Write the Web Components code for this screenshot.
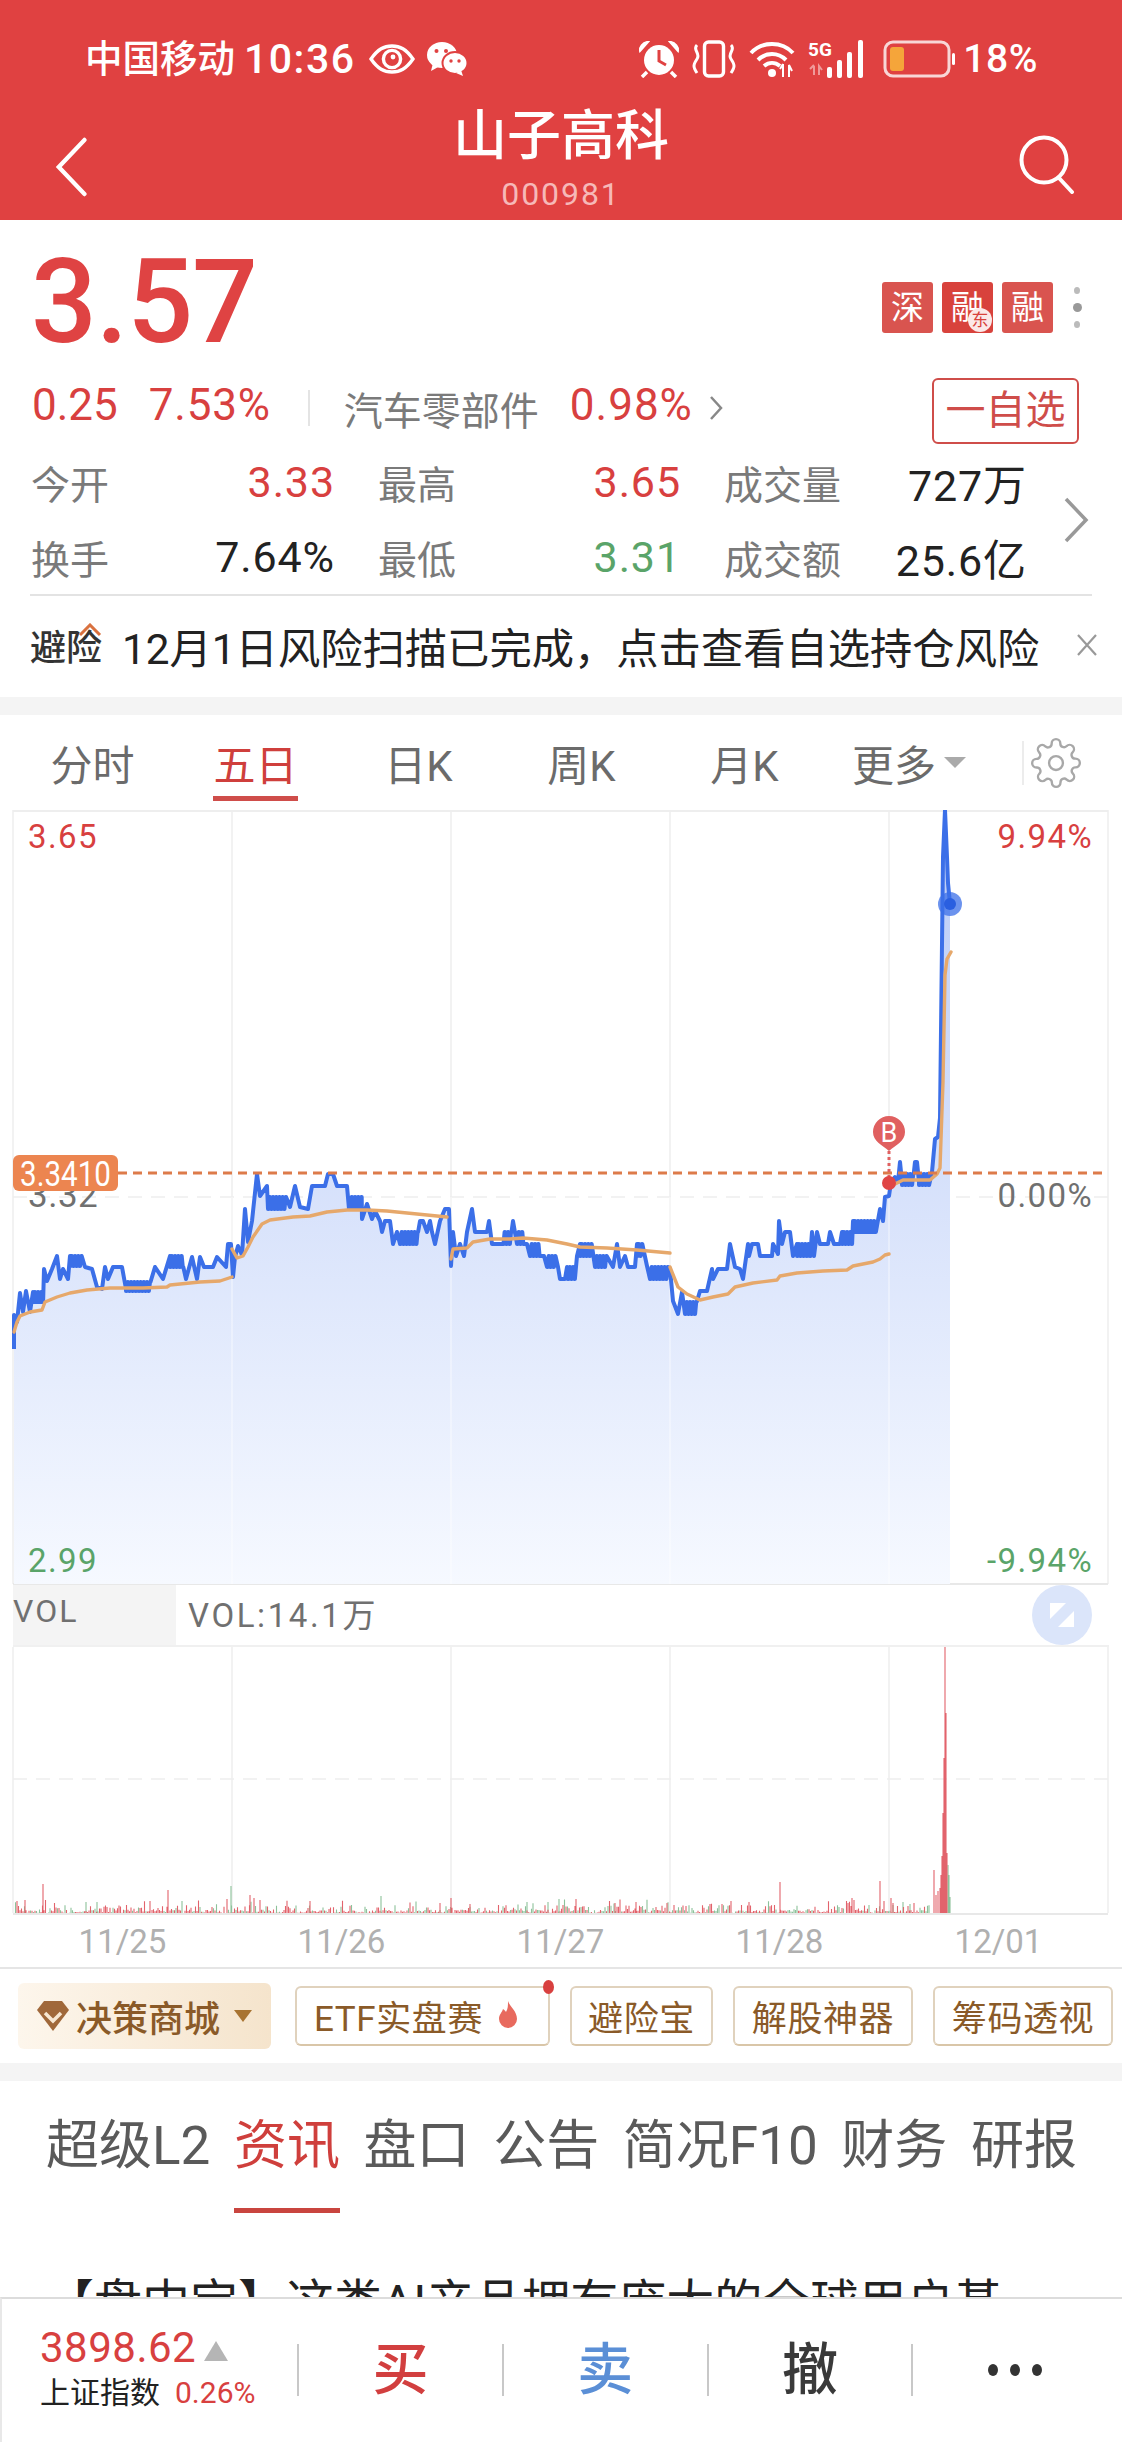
<!DOCTYPE html>
<html lang="zh">
<head>
<meta charset="utf-8">
<title>山子高科</title>
<style>
  html, body { margin: 0; padding: 0; background: #fff; }
  body { width: 1122px; height: 2442px; overflow: hidden; font-family: Roboto, "Noto Sans CJK SC", sans-serif; }
  stock-page { display: flex; flex-direction: column; height: 2442px; }
  .scroll { flex: 1; overflow: hidden; min-height: 0; }
</style>
</head>
<body>
<stock-page>
  <div class="scroll">
    <stock-header></stock-header>
    <quote-panel></quote-panel>
    <risk-notice></risk-notice>
    <gray-band></gray-band>
    <chart-tabs></chart-tabs>
    <price-chart></price-chart>
    <vol-header></vol-header>
    <volume-chart></volume-chart>
    <date-axis></date-axis>
    <tool-row></tool-row>
    <gray-band></gray-band>
    <detail-tabs></detail-tabs>
    <news-line>【盘中宝】这类AI产品拥有庞大的全球用户基</news-line>
  </div>
  <bottom-bar></bottom-bar>
</stock-page>

<script>
const FONT = 'Roboto, "Noto Sans CJK SC", sans-serif';

class StockPage extends HTMLElement {
  constructor() {
    super();
    this.attachShadow({ mode: 'open' });
    this.shadowRoot.innerHTML = `
      <style>
        :host { display: flex; flex-direction: column; height: 2442px; font-family: ${FONT}; }
        ::slotted(.scroll) { flex: 1; overflow: hidden; min-height: 0; }
      </style>
      <slot></slot>`;
  }
}

class StockHeader extends HTMLElement {
  constructor() {
    super();
    this.attachShadow({ mode: 'open' });
    this.shadowRoot.innerHTML = `
      <style>
        :host { display: block; height: 220px; background: #e04141; color: #fff; }
        .status { height: 100px; box-sizing: border-box; padding: 39px 84px 0 85px; display: flex; justify-content: space-between; align-items: flex-start; }
        .side { display: flex; align-items: center; height: 40px; }
        .carrier { font-size: 37.500px; line-height: 40px; white-space: nowrap; font-weight: 500; }
        .time { font-size: 41px; line-height: 40px; font-weight: 500; margin-left: 9px; letter-spacing: 1.500px; }
        .pct { font-size: 39px; line-height: 40px; font-weight: 500; margin-left: 8px; letter-spacing: .6px; }
        svg { display: block; flex: none; }
        .nav { height: 120px; display: grid; grid-template-columns: 1fr auto 1fr; position: relative; }
        .back { padding: 37px 0 0 54px; }
        .search { justify-self: end; padding: 34px 45px 0 0; }
        .mid { text-align: center; margin-top: 5px; }
        .name { font-size: 54px; line-height: 64px; font-weight: 500; }
        .code { font-size: 32px; line-height: 34px; margin-top: 8px; color: #f6b8b8; letter-spacing: 1.900px; }
      </style>
      <div class="status">
        <div class="side">
          <span class="carrier">中国移动</span><span class="time">10:36</span>
          <svg style="margin-left:13px" width="46" height="30" viewBox="0 0 46 30"><path d="M2 15C9 5 15 2 23 2s14 3 21 13c-7 10-13 13-21 13S9 25 2 15z" fill="none" stroke="#fff" stroke-width="3.400"/><circle cx="23" cy="15" r="8.600" fill="none" stroke="#fff" stroke-width="3.400"/><circle cx="24" cy="13" r="2.400" fill="#fff"/></svg>
          <svg style="margin-left:11px" width="42" height="36" viewBox="0 0 42 36"><ellipse cx="16" cy="14" rx="15" ry="13" fill="#fff"/><path d="M7 22l-2 8 9-5z" fill="#fff"/><ellipse cx="29" cy="22" rx="12.500" ry="11" fill="#fff" stroke="#e04141" stroke-width="2"/><path d="M35 29l2 6-7-3z" fill="#fff"/><circle cx="10.500" cy="10" r="2" fill="#e04141"/><circle cx="20" cy="10" r="2" fill="#e04141"/><circle cx="25" cy="20" r="1.700" fill="#e04141"/><circle cx="33" cy="20" r="1.700" fill="#e04141"/></svg>
        </div>
        <div class="side">
          <svg width="42" height="38" viewBox="0 0 42 38"><circle cx="21" cy="20" r="15" fill="#fff"/><path d="M21 10v11l7 4" fill="none" stroke="#e04141" stroke-width="3"/><path d="M2 11L10 2l-1 0C5 3 1 7 2 11zM40 11L32 2l1 0c4 1 8 5 7 9z" fill="#fff" stroke="#fff" stroke-width="2"/><path d="M9 32l-5 5M33 32l5 5" stroke="#fff" stroke-width="3.500"/></svg>
          <svg style="margin-left:11px" width="46" height="38" viewBox="0 0 46 38"><rect x="13.500" y="2" width="19" height="34" rx="4" fill="none" stroke="#fff" stroke-width="3.400"/><path d="M6 5c-5 5 4 8 0 14s-4 8 0 14M40 5c5 5-4 8 0 14s4 8 0 14" fill="none" stroke="#fff" stroke-width="3"/></svg>
          <svg style="margin-left:12px" width="47" height="38" viewBox="0 0 47 38"><path d="M2 13C13 1 33 1 44 13" fill="none" stroke="#fff" stroke-width="4"/><path d="M9 20c8-8 20-8 28 0" fill="none" stroke="#fff" stroke-width="4"/><path d="M15 26c5-4 11-4 16 0" fill="none" stroke="#fff" stroke-width="4"/><circle cx="23" cy="33" r="4" fill="#fff"/><path d="M34 24v13M34 24l-3 5M40 37V25l3 6" fill="none" stroke="#fff" stroke-width="2"/></svg>
          <svg style="margin-left:12px" width="60" height="40" viewBox="0 0 60 40"><text x="0" y="17" font-size="19" font-weight="700" fill="#fff" font-family="Roboto">5G</text><path d="M6 27v9M2 30l4-4M11 36v-9l3 4" fill="none" stroke="#ef9a9a" stroke-width="2"/><g fill="#fff"><rect x="19" y="28" width="5" height="11" rx="2"/><rect x="29" y="21" width="5" height="18" rx="2"/><rect x="39" y="13" width="5" height="26" rx="2"/><rect x="50" y="1" width="5" height="38" rx="2"/></g></svg>
          <svg style="margin-left:15px" width="72" height="38" viewBox="0 0 72 38"><rect x="2" y="2" width="64" height="34" rx="8" fill="none" stroke="#f8d6d6" stroke-width="3"/><rect x="7" y="7" width="14" height="24" rx="3" fill="#f5a53a"/><rect x="69" y="13" width="3" height="12" rx="1.500" fill="#fff"/></svg>
          <span class="pct">18%</span>
        </div>
      </div>
      <div class="nav">
        <div class="back"><svg width="34" height="60" viewBox="0 0 34 60"><path d="M31 3L4 30l27 27" fill="none" stroke="#fff" stroke-width="4.500" stroke-linecap="round" stroke-linejoin="miter" transform="translate(1 0) scale(.95 1)"/></svg></div>
        <div class="mid"><div class="name">山子高科</div><div class="code">000981</div></div>
        <div class="search"><svg width="60" height="60" viewBox="0 0 60 60"><circle cx="27" cy="26" r="22.500" fill="none" stroke="#fff" stroke-width="4"/><path d="M42 44l13 14" stroke="#fff" stroke-width="4" stroke-linecap="round"/></svg></div>
      </div>`;
  }
}

class QuotePanel extends HTMLElement {
  constructor() {
    super();
    this.attachShadow({ mode: 'open' });
    this.shadowRoot.innerHTML = `
      <style>
        :host { display: block; height: 373px; box-sizing: border-box; position: relative; font-family: ${FONT}; }
        .top { height: 152px; display: flex; justify-content: space-between; padding: 0 38px 0 31px; }
        .price { font-size: 116px; line-height: 164px; font-weight: 500; color: #df4343; letter-spacing: -1px; }
        .marks { display: flex; align-items: center; gap: 9px; padding-top: 62px; height: 51px; }
        .mk { width: 51px; height: 51px; border-radius: 3px; background: #d9544f; color: #fff; font-size: 33px; line-height: 51px; text-align: center; position: relative; }
        .mk.dk { background: #d8423c; }
        .dong { position: absolute; right: 1px; bottom: 1px; width: 24px; height: 24px; border-radius: 50%; background: #fbe9e8; color: #d8423c; font-size: 17px; line-height: 24px; }
        .dots { display: flex; flex-direction: column; align-items: center; gap: 9px; margin-left: 8px; width: 14px; }
        .dots i { display: block; width: 6px; height: 7px; border-radius: 50%; background: #bbb; }
        .dots i:nth-child(2) { width: 9px; height: 9px; background: #999; }
        .change { display: flex; align-items: center; height: 72px; padding: 0 43px 0 32px; font-size: 44px; color: #d8403f; }
        .n { margin-bottom: 6px; }
        .change .g { margin-left: 31px; letter-spacing: .8px; }
        .rule { width: 2px; height: 36px; background: #e4e4e4; margin: 0 34px 0 37px; }
        .sector { font-size: 39px; color: #7a7a7a; }
        .sp { margin-left: 31px; letter-spacing: 1px; }
        .add { margin-left: auto; margin-top: 6px; width: 147px; height: 66px; box-sizing: border-box; border: 2px solid #cf4d4a; border-radius: 6px; color: #cf4d4a; font-size: 40px; line-height: 62px; text-align: center; white-space: nowrap; }
        .grid { display: grid; grid-template-columns: 304px 303px 303px; column-gap: 43px; padding-left: 31px; }
        .cell { display: flex; justify-content: space-between; align-items: center; height: 75px; font-size: 39px; color: #7a7a7a; }
        .cell b { font-weight: 400; font-size: 43px; letter-spacing: .9px; }
        .r { color: #d8403f; } .k { color: #222; } .gn { color: #5aa469; }
        .more { position: absolute; left: 1063px; top: 277px; }
        .line { height: 2px; background: #e3e3e3; margin: 0 30px; }
      </style>
      <div class="top">
        <div class="price">3.57</div>
        <div class="marks">
          <div class="mk">深</div>
          <div class="mk dk">融<span class="dong">东</span></div>
          <div class="mk">融</div>
          <div class="dots"><i></i><i></i><i></i></div>
        </div>
      </div>
      <div class="change">
        <span class="n">0.25</span><span class="n g">7.53%</span><span class="rule"></span>
        <span class="sector">汽车零部件</span><span class="n sp">0.98%</span>
        <svg style="margin-left:15px" width="16" height="26" viewBox="0 0 16 26"><path d="M3 2l10 11L3 24" fill="none" stroke="#888" stroke-width="2.500"/></svg>
        <span class="add">一自选</span>
      </div>
      <div class="grid">
        <div class="cell"><span>今开</span><b class="r">3.33</b></div>
        <div class="cell"><span>最高</span><b class="r">3.65</b></div>
        <div class="cell"><span>成交量</span><b class="k">727万</b></div>
        <div class="cell"><span>换手</span><b class="k">7.64%</b></div>
        <div class="cell"><span>最低</span><b class="gn">3.31</b></div>
        <div class="cell"><span>成交额</span><b class="k">25.6亿</b></div>
      </div>
      <svg class="more" width="26" height="46" viewBox="0 0 26 46"><path d="M3 2l20 21L3 44" fill="none" stroke="#999" stroke-width="3.500"/></svg>
      <div class="line"></div>`;
  }
}

class RiskNotice extends HTMLElement {
  constructor() {
    super();
    this.attachShadow({ mode: 'open' });
    this.shadowRoot.innerHTML = `
      <style>
        :host { display: flex; align-items: center; height: 104px; padding: 0 24px 0 30px; font-family: ${FONT}; color: #222; }
        .tag { position: relative; font-size: 36px; font-weight: 500; width: 72px; color: #333; white-space: nowrap; }
        .tag svg { position: absolute; left: 48px; top: 4px; }
        .txt { font-size: 42.300px; margin-left: 20px; white-space: nowrap; }
        svg.x { margin-left: auto; }
      </style>
      <span class="tag">避险<svg width="24" height="14" viewBox="0 0 24 14"><path d="M2 12L12 2l10 10" fill="none" stroke="#d9713f" stroke-width="3"/></svg></span>
      <span class="txt">12月1日风险扫描已完成，点击查看自选持仓风险</span>
      <svg class="x" width="22" height="24" viewBox="0 0 22 24"><path d="M2 2l18 20M20 2L2 22" stroke="#999" stroke-width="2.200"/></svg>`;
  }
}

class GrayBand extends HTMLElement {
  constructor() {
    super();
    this.attachShadow({ mode: 'open' });
    this.shadowRoot.innerHTML = `<style>:host { display: block; height: 18px; background: #f4f4f4; }</style>`;
  }
}

class ChartTabs extends HTMLElement {
  constructor() {
    super();
    this.attachShadow({ mode: 'open' });
    const tabs = ['分时', '五日', '日K', '周K', '月K'];
    this.shadowRoot.innerHTML = `
      <style>
        :host { display: flex; height: 95px; box-sizing: border-box; padding-left: 11px; align-items: stretch; font-family: ${FONT}; color: #6b6b6b; font-size: 42px; }
        .t { width: 163px; display: flex; justify-content: center; align-items: center; }
        .t span { display: block; line-height: 52px; padding-top: 16px; padding-bottom: 3px; border-bottom: 5px solid transparent; }
        .t.on { color: #cf3f3c; }
        .t.on span { border-bottom-color: #cf4d4a; }
        .m { display: flex; align-items: center; margin-left: 26px; width: 170px; }
        .m i { display: block; width: 0; height: 0; border: 11px solid transparent; border-top: 11px solid #aaa; border-bottom: 0; margin-left: 8px; }
        .sep { width: 2px; height: 44px; background: #ececec; align-self: center; }
        .gear { align-self: center; margin: 0 0 0 6px; }
      </style>
      ${tabs.map((t, i) => `<div class="t${i === 1 ? ' on' : ''}"><span>${t}</span></div>`).join('')}
      <div class="m"><span>更多</span><i></i></div>
      <div class="sep"></div>
      <svg class="gear" width="52" height="52" viewBox="0 0 24 24" fill="none" stroke="#a8a8a8" stroke-width="1.100"><circle cx="12" cy="12" r="3.200"/><path d="M19.400 15a1.650 1.650 0 0 0 .33 1.820l.06.06a2 2 0 0 1-2.830 2.830l-.06-.06a1.650 1.650 0 0 0-1.820-.33 1.650 1.650 0 0 0-1 1.510V21a2 2 0 0 1-4 0v-.09A1.650 1.650 0 0 0 9 19.400a1.650 1.650 0 0 0-1.820.33l-.06.06a2 2 0 0 1-2.830-2.830l.06-.06a1.650 1.650 0 0 0 .33-1.820 1.650 1.650 0 0 0-1.510-1H3a2 2 0 0 1 0-4h.09A1.650 1.650 0 0 0 4.600 9a1.650 1.650 0 0 0-.33-1.820l-.06-.06a2 2 0 0 1 2.830-2.830l.06.06a1.650 1.650 0 0 0 1.820.33H9a1.650 1.650 0 0 0 1-1.510V3a2 2 0 0 1 4 0v.09a1.650 1.650 0 0 0 1 1.510 1.650 1.650 0 0 0 1.820-.33l.06-.06a2 2 0 0 1 2.830 2.830l-.06.06a1.650 1.650 0 0 0-.33 1.820V9a1.650 1.650 0 0 0 1.510 1H21a2 2 0 0 1 0 4h-.09a1.650 1.650 0 0 0-1.510 1z"/></svg>`;
  }
}

// o(x1,x2,a,b) = a stretch where the price flips fast between two ticks
const o = (x1, x2, a, b) => { const r = []; let f = 0; for (let x = x1; x <= x2; x += 1.6) { r.push([x, f ? a : b]); r.push([x + .5, f ? a : b]); f = !f; } return r; };

const BLUE = [
  [14,1350],[14,1316],[17,1323],[20,1294],[23,1313],[26,1292],[30,1313],[33,1293],...o(33,43,1293,1303),[44,1270],[47,1282],[52,1270],[57,1257],[60,1280],[63,1270],[68,1280],[70,1257],...o(70,82,1257,1267),[85,1268],[92,1270],[97,1288],[102,1290],[105,1268],[108,1280],[113,1268],[122,1268],[126,1290],...o(126,150,1283,1292),[155,1268],[163,1280],[170,1257],...o(170,183,1257,1268),[186,1280],[192,1258],[197,1280],[200,1258],[204,1268],[213,1268],[217,1258],[226,1268],[228,1245],[231,1245],[233,1278],[235,1258],[238,1247],[242,1256],[245,1210],[248,1243],[252,1222],[257,1175],[260,1197],[267,1187],[268,1210],...o(268,287,1198,1210),[290,1208],[295,1187],[300,1208],[308,1210],[312,1187],[325,1187],[328,1175],[333,1175],[337,1187],[347,1187],[349,1210],
  ...o(350,362,1198,1210),[362,1220],[367,1205],[372,1220],[375,1212],[380,1222],[382,1233],[385,1222],[390,1222],[393,1245],[397,1233],[400,1245],...o(400,418,1233,1245),[420,1222],[423,1222],[427,1233],[430,1222],[432,1233],[435,1245],[440,1222],[445,1210],[449,1210],[451,1267],[453,1233],[456,1257],[460,1245],[464,1257],[467,1233],[472,1210],[475,1233],[487,1233],[489,1222],[492,1245],[502,1245],...o(503,512,1233,1245),[513,1222],[517,1245],...o(517,524,1233,1245),[527,1245],...o(530,541,1245,1257),[544,1257],...o(547,556,1257,1268),[558,1268],[560,1280],[565,1280],[567,1268],...o(568,575,1268,1280),[577,1257],[580,1245],...o(580,592,1245,1257),[595,1268],...o(595,607,1257,1268),[613,1268],[617,1245],[620,1268],[625,1257],[628,1268],[635,1268],[637,1245],...o(637,643,1245,1257),[647,1267],[650,1280],...o(650,668,1268,1280),
  [670,1270],[673,1302],[678,1315],[682,1293],[685,1315],...o(685,697,1303,1315),[700,1292],[707,1292],[712,1270],[713,1280],[718,1270],[727,1270],[730,1245],[735,1268],[740,1270],[743,1280],[748,1245],[749,1257],[752,1245],[758,1245],[760,1257],[772,1257],[773,1245],[778,1255],[779,1222],[782,1245],[785,1233],[790,1233],[793,1257],[797,1245],...o(797,810,1245,1257),[812,1233],[814,1257],[817,1233],[820,1245],[828,1245],[830,1233],[834,1245],[840,1245],[842,1233],...o(842,852,1233,1245),[853,1222],...o(853,877,1222,1233),[880,1210],[883,1222],[885,1198],[889,1197],[891,1183],[895,1178],[898,1183],[900,1163],[902,1183],...o(902,914,1175,1186),[915,1163],[917,1163],[919,1183],...o(919,930,1175,1186),[932,1173],[935,1140],[938,1138],[940,1119],[943,858],[945,811],[947,858],[948,884],[950,905]
];
const ORANGE = [
  [[14,1333],[17,1323],[20,1317],[30,1313],[42,1311],[45,1303],[57,1298],[70,1294],[87,1291],[110,1289],[143,1289],[167,1288],[170,1286],[200,1283],[220,1282],[232,1278]],
  [[232,1250],[237,1259],[243,1257],[248,1248],[253,1238],[262,1225],[270,1221],[293,1218],[310,1217],[327,1213],[347,1211],[367,1211],[387,1212],[417,1215],[447,1218]],
  [[451,1260],[453,1250],[467,1249],[473,1243],[490,1240],[510,1240],[523,1239],[547,1241],[567,1245],[580,1248],[607,1249],[637,1251],[670,1254]],
  [[670,1268],[678,1288],[687,1295],[700,1301],[713,1298],[728,1295],[735,1288],[753,1284],[777,1281],[780,1277],[797,1274],[823,1272],[847,1271],[853,1267],[873,1263],[880,1260],[885,1256],[889,1255]],
  [[895,1185],[903,1181],[930,1181],[937,1175],[940,1169],[943,1083],[945,976],[947,960],[951,953]]
];
const pts = a => a.map(p => p.join(',')).join(' ');

class PriceChart extends HTMLElement {
  constructor() {
    super();
    this.attachShadow({ mode: 'open' });
    const vx = [13, 232, 451, 670, 889, 1108];
    this.shadowRoot.innerHTML = `
      <style>
        :host { display: block; height: 775px; font-family: ${FONT}; }
        svg { display: block; }
        text { font-family: ${FONT}; font-size: 33px; letter-spacing: 1.400px; }
      </style>
      <svg width="1122" height="775" viewBox="0 811 1122 775">
        <defs><linearGradient id="fill" gradientUnits="userSpaceOnUse" x1="0" y1="811" x2="0" y2="1585"><stop offset="0" stop-color="#b9cbf7"/><stop offset="1" stop-color="#f6f9ff"/></linearGradient></defs>
        ${vx.map(x => `<line x1="${x}" x2="${x}" y1="811" y2="1585" stroke="#eeeeee" stroke-width="1.500"/>`).join('')}
        <line x1="13" x2="1108" y1="812" y2="812" stroke="#eeeeee" stroke-width="2"/>
        <line x1="13" x2="1108" y1="1198" y2="1198" stroke="#eeeeee" stroke-width="1.500" stroke-dasharray="14 9"/>
        <line x1="13" x2="1108" y1="1585" y2="1585" stroke="#e8e8e8" stroke-width="2"/>
        <polygon fill="url(#fill)" points="14,1585 ${pts(BLUE)} 950,1585"/>
        ${vx.slice(1, 5).map(x => `<line x1="${x}" x2="${x}" y1="1198" y2="1585" stroke="#ffffff" stroke-opacity=".45" stroke-width="1.500"/>`).join('')}
        <polyline fill="none" stroke="#3b6fe8" stroke-width="4" stroke-linejoin="round" points="${pts(BLUE)}"/>
        ${ORANGE.map(a => `<polyline fill="none" stroke="#e6a86b" stroke-width="3.400" stroke-linejoin="round" stroke-linecap="round" points="${pts(a)}"/>`).join('')}
        <line x1="118" x2="1108" y1="1174" y2="1174" stroke="#dd7b4a" stroke-width="3" stroke-dasharray="9 6"/>
        <text x="28" y="1208" fill="#707070" style="font-size:35px;letter-spacing:.5px">3.32</text>
        <rect x="13" y="1156" width="105" height="36" rx="6" fill="#ec8550"/>
        <text x="20" y="1187" fill="#fff" textLength="91" lengthAdjust="spacingAndGlyphs" style="font-size:35px;letter-spacing:0">3.3410</text>
        <text x="28" y="849" fill="#d8403f">3.65</text>
        <text x="28" y="1573" fill="#5aa469">2.99</text>
        <text x="1093" y="849" fill="#d8403f" text-anchor="end">9.94%</text>
        <text x="1093" y="1208" fill="#707070" text-anchor="end">0.00%</text>
        <text x="1093" y="1573" fill="#5aa469" text-anchor="end">-9.94%</text>
        <line x1="889" x2="889" y1="1152" y2="1180" stroke="#e06060" stroke-width="3" stroke-dasharray="3 3"/>
        <circle cx="889" cy="1184" r="7" fill="#e04545"/>
        <path d="M873 1133a16 16 0 1 1 32 0c0 9-9 13-16 19-7-6-16-10-16-19z" fill="#e06060"/>
        <text x="889" y="1143" text-anchor="middle" fill="#fff" style="font-size:27px;letter-spacing:0">B</text>
        <circle cx="950" cy="905" r="12" fill="#3b6fe8" fill-opacity=".75"/>
        <circle cx="950" cy="905" r="6" fill="#2a5fe0"/>
      </svg>`;
  }
}

class VolHeader extends HTMLElement {
  constructor() {
    super();
    this.attachShadow({ mode: 'open' });
    this.shadowRoot.innerHTML = `
      <style>
        :host { display: flex; align-items: stretch; height: 60px; margin: 0 13px; border-bottom: 2px solid #f0f0f0; font-family: ${FONT}; color: #707070; font-size: 32px; letter-spacing: 2px; }
        .lab { width: 163px; background: #f4f4f4; line-height: 52px; }
        .val { margin-left: 12px; line-height: 62px; font-size: 33px; letter-spacing: 2.600px; }
        svg { margin-left: auto; margin-right: 17px; align-self: center; }
      </style>
      <div class="lab">VOL</div>
      <div class="val">VOL:14.1万</div>
      <svg width="60" height="60" viewBox="0 0 60 60"><circle cx="30" cy="30" r="30" fill="#dbe5fa"/><path d="M18 18h16L18 34zM42 42H26l16-16z" fill="#fff"/></svg>`;
  }
}

class VolumeChart extends HTMLElement {
  constructor() {
    super();
    this.attachShadow({ mode: 'open' });
    const base = 1914;
    // fixed seed so the bars stay the same on every run
    let s = 981;
    const rnd = () => (s = (s * 16807) % 2147483647) / 2147483647;
    let red = '', green = '';
    const bar = (x, h, up) => { const d = `M${x} ${base}v${-h}`; if (up) red += d; else green += d; };
    for (let x = 14; x < 930; x += 1.5) {
      const r = rnd();
      const h = r < .55 ? rnd() * 3 : r < .93 ? 2 + rnd() * 6 : 5 + rnd() * 9;
      bar(x, h, rnd() < .68);
    }
    [[43,29,1],[25,13,1],[17,12,1],[86,11,0],[97,11,0],[150,12,1],[168,23,1],[231,27,0],[227,14,1],[250,18,1],[254,15,1],[260,13,1],[310,12,1],[381,17,0],[451,15,1],[440,10,1],[470,9,1],[527,11,0],[548,11,0],[559,14,0],[576,14,1],[615,10,1],[636,11,1],[667,10,1],[710,9,1],[731,12,1],[749,11,1],[780,31,1],[852,15,1],[880,32,1],[884,12,1],[891,15,1],[893,10,1],[903,11,0],[910,9,0],[914,10,1],[934,43,1],[936,18,1],[938,22,1],
     [940,25,1],[941,38,1],[942,57,1],[943,100,1],[944,155,1],[945,266,1],[946,200,1],[947,60,1],[948,48,0],[949,38,0],[950,16,0]].forEach(b => bar(b[0], b[1], b[2]));
    const vx = [13, 232, 451, 670, 889, 1108];
    this.shadowRoot.innerHTML = `
      <style>:host { display: block; height: 268px; } svg { display: block; }</style>
      <svg width="1122" height="268" viewBox="0 1648 1122 268">
        ${vx.map(x => `<line x1="${x}" x2="${x}" y1="1648" y2="1914" stroke="#eeeeee" stroke-width="1.500"/>`).join('')}
        <line x1="13" x2="1108" y1="1780" y2="1780" stroke="#eeeeee" stroke-width="1.500" stroke-dasharray="14 9"/>
        <line x1="13" x2="1108" y1="1915" y2="1915" stroke="#e8e8e8" stroke-width="2"/>
        <path d="${green}" stroke="#8cc29a" stroke-width="1.100" fill="none"/>
        <path d="${red}" stroke="#e2636c" stroke-width="1.100" fill="none"/>
      </svg>`;
  }
}

class DateAxis extends HTMLElement {
  constructor() {
    super();
    this.attachShadow({ mode: 'open' });
    const days = ['11/25', '11/26', '11/27', '11/28', '12/01'];
    this.shadowRoot.innerHTML = `
      <style>
        :host { display: grid; grid-template-columns: repeat(5, 219px); padding-left: 13px; height: 52px; border-bottom: 2px solid #e5e5e5; font-family: ${FONT}; color: #b0b0b0; font-size: 33px; }
        span { text-align: center; line-height: 54px; }
      </style>
      ${days.map(d => `<span>${d}</span>`).join('')}`;
  }
}

class ToolRow extends HTMLElement {
  constructor() {
    super();
    this.attachShadow({ mode: 'open' });
    this.shadowRoot.innerHTML = `
      <style>
        :host { display: flex; align-items: center; height: 94px; padding-left: 18px; font-family: ${FONT}; color: #8a5a28; font-size: 35px; }
        .shop { width: 253px; height: 66px; box-sizing: border-box; border-radius: 6px; background: linear-gradient(90deg, #fdf6ec, #f5e4cc); display: flex; align-items: center; padding-left: 18px; font-weight: 500; white-space: nowrap; font-size: 36px; }
        .shop span { margin-left: 6px; }
        .shop i { display: block; border: 9px solid transparent; border-top: 12px solid #a87432; border-bottom: 0; margin-left: 14px; }
        .b { height: 60px; box-sizing: border-box; border: 2px solid #e0d2bd; border-bottom-color: #d9c6a8; border-radius: 6px; display: flex; align-items: center; justify-content: center; white-space: nowrap; position: relative; letter-spacing: .6px; padding-bottom: 2px; }
        .etf { width: 255px; margin-left: 24px; justify-content: flex-start; padding-left: 17px; }
        .risk { width: 143px; margin-left: 20px; }
        .w { width: 180px; margin-left: 20px; }
        .etf u { position: absolute; right: -6px; top: -8px; width: 11px; height: 14px; border-radius: 50%; background: #d8403f; }
        .etf svg { margin-left: 14px; }
      </style>
      <div class="shop"><svg width="34" height="32" viewBox="0 0 34 32"><path d="M8 1h18l7 9-16 21L1 10z" fill="#a0683a"/><path d="M9 13l8 8 8-8" fill="none" stroke="#f7e7d2" stroke-width="3.500"/></svg><span>决策商城</span><i></i></div>
      <div class="b etf">ETF实盘赛<svg width="22" height="30" viewBox="0 0 22 30"><path d="M11 1c2 6 9 10 9 18a9 9 0 0 1-18 0c0-5 3-6 4-10 2 1 3 3 3 3 2-3 2-7 2-11z" fill="#e86a5e"/></svg><u></u></div>
      <div class="b risk">避险宝</div>
      <div class="b w">解股神器</div>
      <div class="b w">筹码透视</div>`;
  }
}

class DetailTabs extends HTMLElement {
  constructor() {
    super();
    this.attachShadow({ mode: 'open' });
    const tabs = ['超级L2', '资讯', '盘口', '公告', '简况F10', '财务', '研报'];
    this.shadowRoot.innerHTML = `
      <style>
        :host { display: flex; justify-content: space-between; padding: 33px 45px 0 46px; font-family: ${FONT}; color: #5a5a5a; font-size: 53px; }
        span { display: block; line-height: 64px; padding-bottom: 30px; border-bottom: 5px solid transparent; white-space: nowrap; }
        span.on { color: #cf3f3c; border-bottom-color: #c9453f; }
      </style>
      ${tabs.map((t, i) => `<span class="${i === 1 ? 'on' : ''}">${t}</span>`).join('')}`;
  }
}

class NewsLine extends HTMLElement {
  constructor() {
    super();
    this.attachShadow({ mode: 'open' });
    this.shadowRoot.innerHTML = `
      <style>
        :host { display: block; margin-top: 58px; padding-left: 46px; font-family: ${FONT}; font-size: 48px; line-height: 64px; color: #222; white-space: nowrap; }
      </style>
      <slot></slot>`;
  }
}

class BottomBar extends HTMLElement {
  constructor() {
    super();
    this.attachShadow({ mode: 'open' });
    this.shadowRoot.innerHTML = `
      <style>
        :host { display: flex; align-items: center; height: 145px; flex: none; box-sizing: border-box; border-top: 2px solid #dcdcdc; border-left: 2px solid #e8e8e8; background: #fff; font-family: ${FONT}; padding: 0 6px 2px 0; }
        .idx { width: 295px; padding-left: 38px; box-sizing: border-box; flex: none; }
        .p { display: flex; align-items: center; font-size: 42px; line-height: 44px; color: #d8403f; letter-spacing: .5px; }
        .p i { display: block; border: 12px solid transparent; border-bottom: 20px solid #b5b5b5; border-top: 0; margin-left: 8px; margin-top: 6px; }
        .s { display: flex; align-items: center; font-size: 30px; line-height: 40px; color: #222; white-space: nowrap; margin-top: 3px; }
        .s b { font-weight: 400; color: #d8403f; margin-left: 15px; font-size: 30px; }
        .d { width: 2px; height: 52px; background: #c8c8c8; flex: none; }
        .c { flex: 1; text-align: center; font-size: 56px; font-weight: 500; line-height: 70px; }
        .buy { color: #d23f3f; } .sell { color: #5b8fd6; } .rev { color: #3a3a3a; }
        .dots { display: flex; justify-content: center; gap: 12px; }
        .dots i { width: 10px; height: 12px; border-radius: 50%; background: #333; }
      </style>
      <div class="idx">
        <div class="p">3898.62<i></i></div>
        <div class="s">上证指数<b>0.26%</b></div>
      </div>
      <span class="d"></span><div class="c buy">买</div>
      <span class="d"></span><div class="c sell">卖</div>
      <span class="d"></span><div class="c rev">撤</div>
      <span class="d"></span><div class="c dots"><i></i><i></i><i></i></div>`;
  }
}

customElements.define('stock-header', StockHeader);
customElements.define('quote-panel', QuotePanel);
customElements.define('risk-notice', RiskNotice);
customElements.define('gray-band', GrayBand);
customElements.define('chart-tabs', ChartTabs);
customElements.define('price-chart', PriceChart);
customElements.define('vol-header', VolHeader);
customElements.define('volume-chart', VolumeChart);
customElements.define('date-axis', DateAxis);
customElements.define('tool-row', ToolRow);
customElements.define('detail-tabs', DetailTabs);
customElements.define('news-line', NewsLine);
customElements.define('bottom-bar', BottomBar);
customElements.define('stock-page', StockPage);
</script>
</body>
</html>
